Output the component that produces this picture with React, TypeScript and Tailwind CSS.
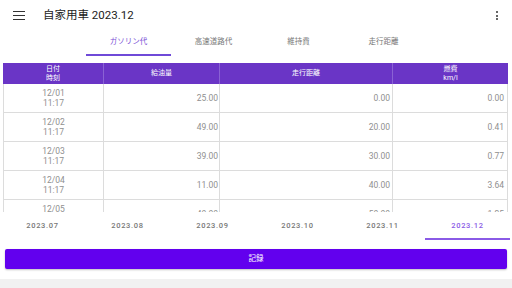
import React from "react";

const rows = [
  { d: "12/01", t: "11:17", a: "25.00", b: "0.00", c: "0.00" },
  { d: "12/02", t: "11:17", a: "49.00", b: "20.00", c: "0.41" },
  { d: "12/03", t: "11:17", a: "39.00", b: "30.00", c: "0.77" },
  { d: "12/04", t: "11:17", a: "11.00", b: "40.00", c: "3.64" },
  { d: "12/05", t: "11:17", a: "40.00", b: "50.00", c: "1.25" },
];

const tabs = ["ガソリン代", "高速道路代", "維持費", "走行距離"];
const months = ["2023.07", "2023.08", "2023.09", "2023.10", "2023.11", "2023.12"];

export default function App() {
  return (
    <div
      className="w-[512px] h-[288px] flex flex-col bg-white overflow-hidden"
      style={{ fontFamily: "Roboto, 'Noto Sans CJK JP', sans-serif" }}
    >
      {/* App bar */}
      <div className="h-[30px] flex items-center shrink-0">
        <div className="w-[12px] ml-[13px] flex flex-col gap-[2.5px] mt-[1px]">
          <div className="h-[1.5px] bg-[#333]" />
          <div className="h-[1.5px] bg-[#333]" />
          <div className="h-[1.5px] bg-[#333]" />
        </div>
        <div className="ml-[18px] text-[11.5px] text-[#222] mt-[1px]">自家用車 2023.12</div>
        <div className="ml-auto mr-[14px] flex flex-col gap-[1.5px] items-center mt-[1px]">
          <div className="w-[2px] h-[2px] bg-[#333] rounded-full" />
          <div className="w-[2px] h-[2px] bg-[#333] rounded-full" />
          <div className="w-[2px] h-[2px] bg-[#333] rounded-full" />
        </div>
      </div>

      {/* Tabs */}
      <div className="h-[26px] flex justify-center shrink-0">
        {tabs.map((t, i) => (
          <div key={t} className="w-[85px] flex flex-col">
            <div
              className={`flex-1 flex items-center justify-center text-[7.5px] ${
                i === 0 ? "text-[#7a4fd6]" : "text-[#777]"
              }`}
            >
              {t}
            </div>
            <div className={`h-[2px] ${i === 0 ? "bg-[#6f4ad8]" : "bg-transparent"}`} />
          </div>
        ))}
      </div>

      {/* Table */}
      <div className="mt-[7px] ml-[3px] w-[505px] h-[149px] overflow-hidden shrink-0">
        <div className="grid grid-cols-[101px_116px_173px_115px] h-[21px] bg-[#6a35c6] text-white text-[7px] leading-[8.5px]">
          <div className="flex flex-col items-center justify-center border-r border-[#8a62d4]">
            <span>日付</span>
            <span>時刻</span>
          </div>
          <div className="flex items-center justify-center border-r border-[#8a62d4]">給油量</div>
          <div className="flex items-center justify-center border-r border-[#8a62d4]">走行距離</div>
          <div className="flex flex-col items-center justify-center">
            <span>燃費</span>
            <span>km/l</span>
          </div>
        </div>
        {rows.map((r) => (
          <div
            key={r.d}
            className="grid grid-cols-[101px_116px_173px_115px] h-[29px] border-b border-[#dcdcdc] text-[8.5px] text-[#8f8f8f]"
          >
            <div className="flex flex-col items-center justify-center leading-[10px] border-l border-r border-[#dcdcdc]">
              <span>{r.d}</span>
              <span>{r.t}</span>
            </div>
            <div className="flex items-center justify-end pr-[1px] border-r border-[#dcdcdc]">{r.a}</div>
            <div className="flex items-center justify-end pr-[2px] border-r border-[#dcdcdc]">{r.b}</div>
            <div className="flex items-center justify-end pr-[3px] border-r border-[#dcdcdc]">{r.c}</div>
          </div>
        ))}
      </div>

      {/* Month tabs */}
      <div className="h-[28px] flex shrink-0">
        {months.map((m, i) => (
          <div key={m} className="w-[85px] flex flex-col">
            <div
              className={`flex-1 flex items-center justify-center text-[7.5px] font-medium tracking-[0.7px] pt-[2px] ${
                i === 5 ? "text-[#8a5ae6]" : "text-[#777]"
              }`}
            >
              {m}
            </div>
            <div className={`h-[2px] ${i === 5 ? "bg-[#8a5ae6]" : "bg-transparent"}`} />
          </div>
        ))}
      </div>

      {/* Button */}
      <div className="pt-[9px] px-[5px] shrink-0">
        <div className="h-[20px] rounded-[2px] bg-[#6200ee] flex items-center justify-center text-white text-[7.5px] shadow-[0_1px_2px_rgba(0,0,0,0.25)]">
          記録
        </div>
      </div>

      <div className="mt-auto h-[9px] bg-[#f1f1f1] shrink-0" />
    </div>
  );
}
